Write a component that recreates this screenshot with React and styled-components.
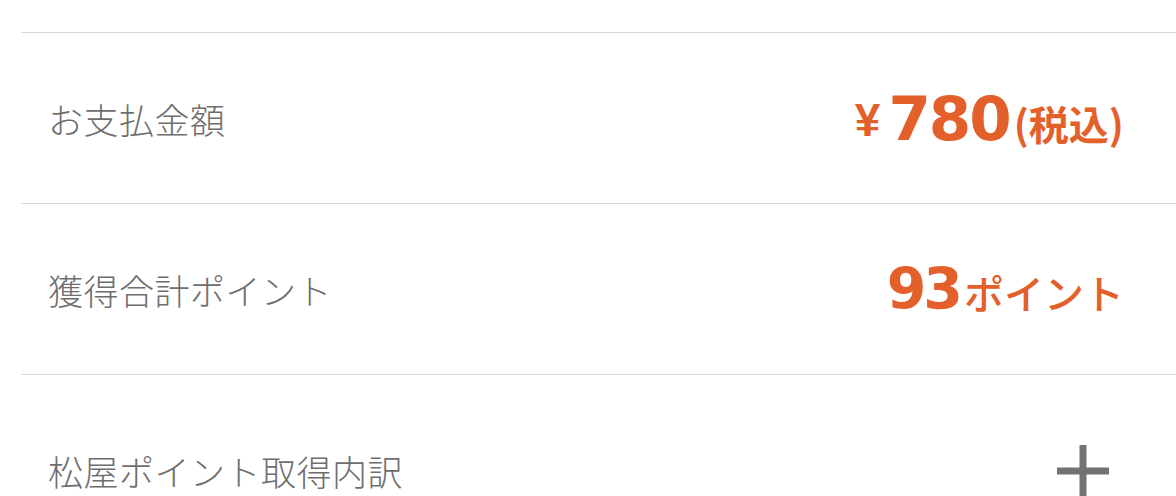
import styled, { createGlobalStyle } from 'styled-components'

const GlobalStyle = createGlobalStyle`
  body {
    margin: 0;
    background: #ffffff;
    font-family: "Noto Sans CJK JP", "Noto Sans", sans-serif;
  }
`

function App() {
  return (
    <>
      <GlobalStyle />
      <Summary>
        <Row $height={171}>
          <Label>お支払金額</Label>
          <Value>
            <Yen>¥</Yen>
            <Number $size={61} $spacing={-2}>780</Number>
            <Unit $size={40} $weight={600}>(税込)</Unit>
          </Value>
        </Row>
        <Row $height={171}>
          <Label>獲得合計ポイント</Label>
          <Value>
            <Number $size={57} $spacing={-3}>93</Number>
            <Unit $size={40} $weight={500}>ポイント</Unit>
          </Value>
        </Row>
        <Row $height={192}>
          <Label>松屋ポイント取得内訳</Label>
          <Toggle aria-label="開く">
            <svg width="52" height="52" viewBox="0 0 52 52">
              <rect x="22.5" y="0" width="7" height="52" fill="#737373" />
              <rect x="0" y="22.5" width="52" height="7" fill="#737373" />
            </svg>
          </Toggle>
        </Row>
      </Summary>
    </>
  )
}

export default App

const Summary = styled.section`
  padding-top: 32px;
  margin-left: 21px;
`
const Row = styled.div`
  display: flex;
  align-items: center;
  justify-content: space-between;
  height: ${p => p.$height}px;
  box-sizing: border-box;
  border-top: 1px solid #d8d8d8;
  padding: 0 52px 0 27px;
`
const Label = styled.span`
  font-size: 35px;
  font-weight: 300;
  color: #6e6e6e;
  letter-spacing: 0.5px;
`
const Value = styled.div`
  display: flex;
  align-items: baseline;
  color: #e4602a;
`
const Yen = styled.span`
  font-family: "Liberation Sans", Arial, sans-serif;
  font-size: 46px;
  font-weight: 700;
  margin-right: 8px;
  position: relative;
  top: -4px;
`
const Number = styled.span`
  font-family: "DejaVu Sans", sans-serif;
  font-size: ${p => p.$size}px;
  font-weight: 700;
  letter-spacing: ${p => p.$spacing}px;
  margin-right: 4px;
`
const Unit = styled.span`
  font-size: ${p => p.$size}px;
  font-weight: ${p => p.$weight};
`
const Toggle = styled.button`
  display: flex;
  padding: 0;
  margin-right: 15px;
  border: none;
  background: none;
`
